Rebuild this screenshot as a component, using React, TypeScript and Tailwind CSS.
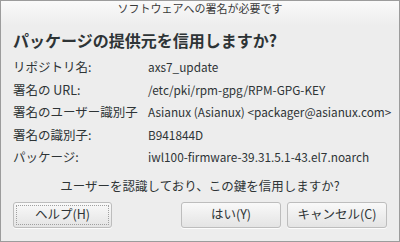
import React, { FC } from "react";

type Row = { label: string; value: string };

const rows: Row[] = [
  { label: "リポジトリ名:", value: "axs7_update" },
  { label: "署名の URL:", value: "/etc/pki/rpm-gpg/RPM-GPG-KEY" },
  { label: "署名のユーザー識別子", value: "Asianux (Asianux) <packager@asianux.com>" },
  { label: "署名の識別子:", value: "B941844D" },
  { label: "パッケージ:", value: "iwl100-firmware-39.31.5.1-43.el7.noarch" },
];

const font = { fontFamily: '"Noto Sans CJK JP", "Noto Sans", sans-serif' };

// ボタン（フォーカス枠はヘルプのみ）
const DialogButton: FC<{ label: string; width: string; focused?: boolean }> = ({ label, width, focused }) => (
  <button
    className={`relative h-[26px] ${width} rounded-[3px] border border-[#bdbdbd] bg-gradient-to-b from-[#f9f9f9] to-[#e4e4e4] text-[12.5px] text-[#2e3436] shadow-[0_1px_0_rgba(255,255,255,0.8)]`}
  >
    {focused && <span className="absolute inset-[2px] border border-dotted border-[#a0a0a0]" />}
    <span className="relative">{label}</span>
  </button>
);

export default function App() {
  return (
    <div
      className="w-[400px] h-[242px] border border-[#9c9c9c] bg-[#ededed] text-[#2e3436] flex flex-col"
      style={font}
    >
      {/* タイトルバー */}
      <div className="h-[24px] bg-gradient-to-b from-[#fafafa] to-[#ededed] text-center text-[11px] leading-[15px] text-[#3a3a3a]">
        ソフトウェアへの署名が必要です
      </div>

      <div className="px-[12px] mt-[4px] text-[16px] font-bold leading-[22px]">
        パッケージの提供元を信用しますか?
      </div>

      <div className="mt-[5px] px-[12px] grid grid-cols-[135px_1fr]">
        {rows.map((r) => (
          <React.Fragment key={r.label}>
            <div className="h-[22.5px] leading-[22.5px] text-[12.5px] whitespace-nowrap">{r.label}</div>
            <div className="h-[22.5px] leading-[22.5px] text-[11.8px] whitespace-nowrap">{r.value}</div>
          </React.Fragment>
        ))}
      </div>

      <div className="mt-[8px] text-center text-[12.5px] leading-[18px]">
        ユーザーを認識しており、この鍵を信用しますか?
      </div>

      <div className="mt-[7px] px-[12px] flex items-center">
        <DialogButton label="ヘルプ(H)" width="w-[99px]" focused />
        <div className="flex-1" />
        <div className="flex gap-[6px]">
          <DialogButton label="はい(Y)" width="w-[100px]" />
          <DialogButton label="キャンセル(C)" width="w-[100px]" />
        </div>
      </div>
    </div>
  );
}
